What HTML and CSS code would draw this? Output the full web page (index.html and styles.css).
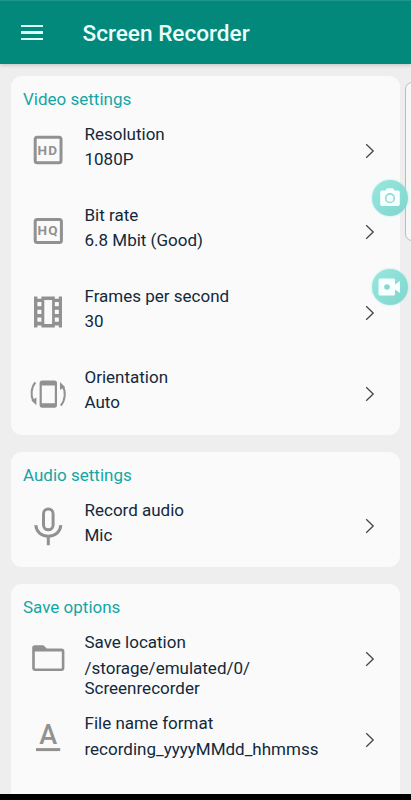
FILE: index.html
```html
<!DOCTYPE html>
<html lang="en">
<head>
  <meta charset="UTF-8" />
  <meta name="viewport" content="width=device-width, initial-scale=1.0"/>
  <title>Screen Recorder</title>
  <link rel="stylesheet" href="styles.css">
</head>
<body>
  <div class="app">
    <header class="toolbar">
      <button type="button" class="menu-button" aria-label="Menu">
        <span></span>
        <span></span>
        <span></span>
      </button>
      <h1>Screen Recorder</h1>
    </header>

    <main class="settings">
      <section class="card">
        <h2>Video settings</h2>
        <div class="row">
          <svg class="icon" viewBox="0 0 40 40">
            <rect class="line" x="7.2" y="7.2" width="25.8" height="25.6" rx="2" />
            <text class="badge" x="9.6 20.3" y="24.8">HD</text>
          </svg>
          <div class="info">
            <p>Resolution</p>
            <p>1080P</p>
          </div>
          <svg class="chevron" viewBox="0 0 10 16"><path d="M1.2 1.2L8.2 8l-7 6.8" /></svg>
        </div>
        <div class="row">
          <svg class="icon" viewBox="0 0 40 40">
            <rect class="line" x="7.2" y="8.4" width="26.2" height="23" rx="2" />
            <text class="badge" x="9.6 20.3" y="24.4">HQ</text>
          </svg>
          <div class="info">
            <p>Bit rate</p>
            <p>6.8 Mbit (Good)</p>
          </div>
          <svg class="chevron" viewBox="0 0 10 16"><path d="M1.2 1.2L8.2 8l-7 6.8" /></svg>
        </div>
        <div class="row">
          <svg class="icon" viewBox="0 0 40 40">
            <path class="fill" fill-rule="evenodd" d="M6 4.6h3.4v2.200h4V4.600h13.400v2.200h4V4.600H34v31h-3.200v-2.200h-4v2.200H13.400v-2.200h-4v2.200H6zM16.300 8v24h7.800V8zM9.400 10v4.200h4V10zm0 7.800v4.200h4v-4.200zm0 7.800v4.200h4v-4.200zM26.800 10v4.200h4V10zm0 7.800v4.200h4v-4.200zm0 7.800v4.200h4v-4.200z" />
          </svg>
          <div class="info">
            <p>Frames per second</p>
            <p>30</p>
          </div>
          <svg class="chevron" viewBox="0 0 10 16"><path d="M1.2 1.2L8.2 8l-7 6.8" /></svg>
        </div>
        <div class="row">
          <svg class="icon" viewBox="0 0 40 40">
            <path class="fill" fill-rule="evenodd" d="M14.2 7.500h12.2a2.6 2.6 0 0 1 2.6 2.6v22a2.6 2.6 0 0 1-2.6 2.6H14.2a2.6 2.6 0 0 1-2.6-2.6v-22a2.6 2.6 0 0 1 2.6-2.6zM13.800 12.500v17.800h13V12.500z" />
            <path class="thin" d="M7.400 9.400C3 14.500 2.600 23 5.200 27.800M32.800 32.600C37.400 27.400 37.800 18.500 35 13.800" />
            <path class="fill" d="M3.400 27.400l5-2.800v7.600zM37.200 14.200l-5.200 2.600V9z" />
          </svg>
          <div class="info">
            <p>Orientation</p>
            <p>Auto</p>
          </div>
          <svg class="chevron" viewBox="0 0 10 16"><path d="M1.2 1.2L8.2 8l-7 6.8" /></svg>
        </div>
      </section>

      <section class="card">
        <h2>Audio settings</h2>
        <div class="row">
          <svg class="icon" viewBox="0 0 40 40">
            <rect class="line" x="15.500" y="3" width="9.600" height="20.800" rx="4.800" />
            <path class="line" d="M7.800 19.200c.4 6.400 5.400 11 12.500 11s12.100-4.600 12.500-11M20.300 30.200v9" />
          </svg>
          <div class="info">
            <p>Record audio</p>
            <p>Mic</p>
          </div>
          <svg class="chevron" viewBox="0 0 10 16"><path d="M1.2 1.2L8.2 8l-7 6.8" /></svg>
        </div>
      </section>

      <section class="card last">
        <h2>Save options</h2>
        <div class="row">
          <svg class="icon" viewBox="0 0 40 40">
            <path class="fill" fill-rule="evenodd" d="M6.800 7.300h8.600l3.400 3.200h14.600a3 3 0 0 1 3 3v16.400a3 3 0 0 1-3 3H7.200a3 3 0 0 1-3-3V10.100A2.700 2.700 0 0 1 6.800 7.300zM6.800 13.400v17h27v-17z" />
          </svg>
          <div class="info">
            <p>Save location</p>
            <p>/storage/emulated/0/<br>Screenrecorder</p>
          </div>
          <svg class="chevron" viewBox="0 0 10 16"><path d="M1.2 1.2L8.2 8l-7 6.8" /></svg>
        </div>
        <div class="row">
          <svg class="icon" viewBox="0 0 40 40">
            <text class="letter" x="20.200" y="25.400" text-anchor="middle">A</text>
            <path class="line" d="M8 30.600h24.200" />
          </svg>
          <div class="info">
            <p>File name format</p>
            <p>recording_yyyyMMdd_hhmmss</p>
          </div>
          <svg class="chevron" viewBox="0 0 10 16"><path d="M1.2 1.2L8.2 8l-7 6.8" /></svg>
        </div>
      </section>
    </main>

    <div class="nav-bar"></div>

    <!-- overlay controls -->
    <div class="edge-panel"></div>
    <button type="button" class="bubble camera" aria-label="Screenshot">
      <svg viewBox="0 0 24 24">
        <path d="M4 4.500h3.500l1.400-2.200h6.200l1.400 2.200H20a1.800 1.800 0 0 1 1.800 1.800v11.900A1.800 1.800 0 0 1 20 20H4a1.800 1.800 0 0 1-1.800-1.800V6.300A1.800 1.800 0 0 1 4 4.500z" />
        <circle class="lens" cx="12" cy="12.200" r="4.300" />
      </svg>
    </button>
    <button type="button" class="bubble video" aria-label="Record">
      <svg viewBox="0 0 24 24">
        <path d="M2 3.500h13.500a1.500 1.500 0 0 1 1.500 1.500v4.500l5-3.500v12l-5-3.500V19a1.500 1.500 0 0 1-1.500 1.500H2A1.500 1.500 0 0 1 .5 19V5A1.500 1.500 0 0 1 2 3.500z" />
        <circle class="dot" cx="9" cy="12" r="2.800" />
      </svg>
    </button>
  </div>
</body>
</html>
```
FILE: styles.css
```css
* {
  box-sizing: border-box;
}

body {
  margin: 0;
  background: #eeeeef;
  font-family: Roboto, sans-serif;
}

h1,
h2,
p {
  margin: 0;
  font-weight: normal;
}

button {
  border: none;
  padding: 0;
}

.app {
  position: relative;
  display: flex;
  flex-direction: column;
  height: 800px;
  overflow: hidden;
}

.toolbar {
  display: flex;
  align-items: center;
  flex: none;
  height: 64px;
  padding: 2px 21px 0;
  background: #02897b;
  border-top: 1px solid #20968a;
  box-shadow: 0 1px 4px rgba(0, 0, 0, 0.2);
}

.toolbar h1 {
  margin-left: 39.5px;
  color: #eafffb;
  font-size: 22.6px;
  font-weight: 500;
}

.menu-button {
  display: flex;
  flex-direction: column;
  gap: 4px;
  width: 22px;
  margin-top: -2px;
  background: none;
}

.menu-button span {
  height: 2.4px;
  background: #d9fff8;
}

.settings {
  display: flex;
  flex-direction: column;
  flex: 1;
  gap: 17px;
  min-height: 0;
  padding: 12px 11px 0;
  overflow: hidden;
}

.card {
  flex: none;
  width: 389px;
  padding: 0 25px 0.6px 12px;
  background: #fafafa;
  border-radius: 11px;
}

.card.last {
  padding-bottom: 30px;
}

.card h2 {
  height: 34px;
  padding-top: 13px;
  color: #14a5a5;
  font-size: 17px;
  line-height: 20px;
}

.row {
  display: flex;
  height: 81px;
}

.icon {
  flex: none;
  width: 40px;
  height: 40px;
  margin: 20px 16.5px 0 5px;
}

.info {
  flex: 1;
  padding-top: 14px;
  color: #12293a;
  font-size: 17px;
  line-height: 20px;
}

.info p + p {
  margin-top: 5.4px;
}

.chevron {
  flex: none;
  width: 10px;
  height: 16px;
  margin-top: 32.5px;
  fill: none;
  stroke: #444;
  stroke-width: 1.3;
}

.fill,
.badge,
.letter {
  fill: #919191;
}

.line,
.thin {
  fill: none;
  stroke: #919191;
  stroke-width: 3;
}

.thin {
  stroke-width: 2;
}

.badge {
  font-size: 13.5px;
  font-weight: 700;
}

.letter {
  font-size: 27px;
  font-weight: 500;
}

.nav-bar {
  flex: none;
  height: 6px;
  background: #000;
}

.edge-panel {
  position: absolute;
  top: 82px;
  right: -10px;
  width: 16px;
  height: 159px;
  background: #f7f7f7;
  border: 1px solid #bbb;
  border-radius: 7px;
}

.bubble {
  position: absolute;
  right: 3px;
  display: flex;
  align-items: center;
  justify-content: center;
  width: 36px;
  height: 36px;
  background: linear-gradient(135deg, #98e8df, #7fd5cd);
  border-radius: 50%;
  box-shadow: 0 0 2px #a5e5df;
}

.bubble svg {
  width: 24px;
  height: 24px;
  fill: #f8ffff;
}

.bubble .lens {
  fill: none;
  stroke: #8fdcd5;
  stroke-width: 1.6;
}

.bubble .dot {
  fill: #86d9d1;
}

.camera {
  top: 180px;
}

.video {
  top: 269px;
}
```
